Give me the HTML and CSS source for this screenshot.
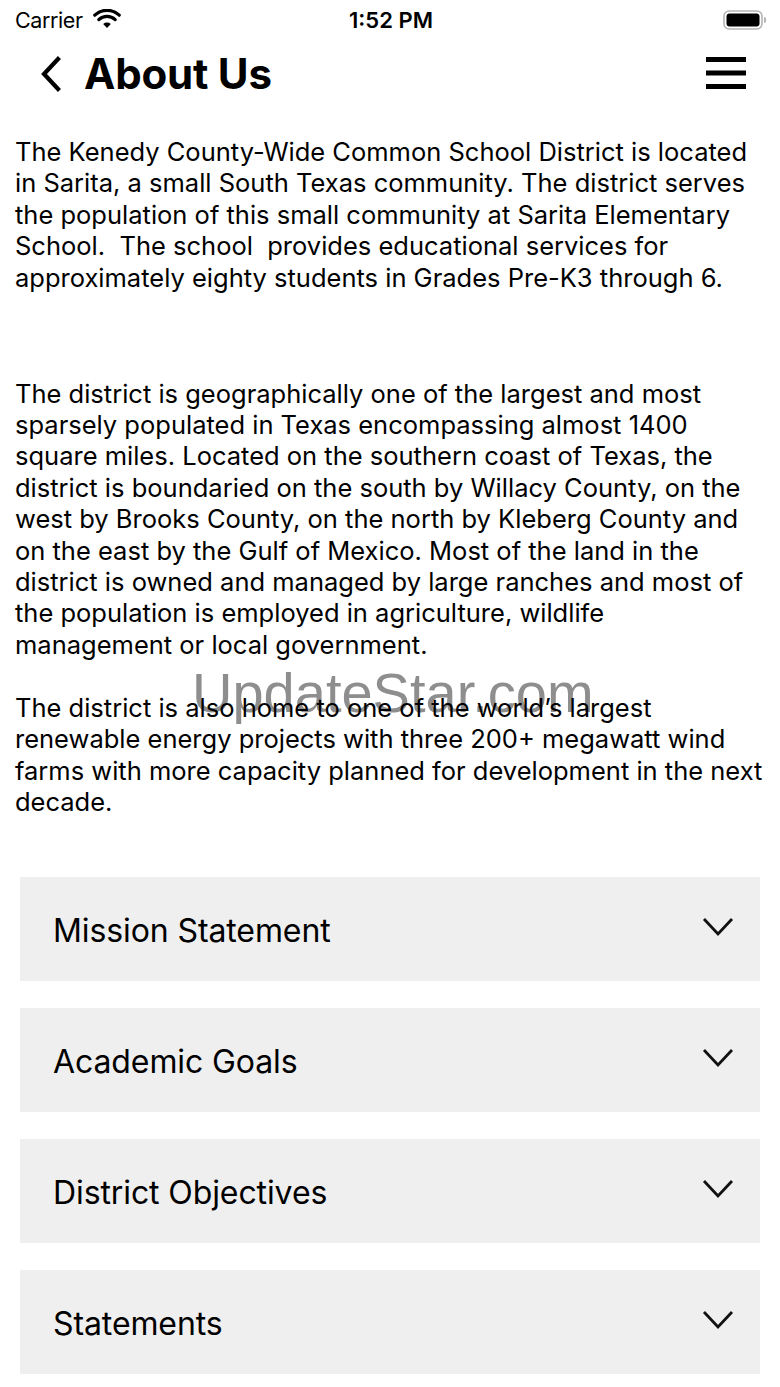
FILE: index.html
```html
<!DOCTYPE html>
<html lang="en">
<head>
<meta charset="utf-8">
<title>About Us</title>
<link rel="stylesheet" href="styles.css">
</head>
<body>
<div class="screen">
  <div class="status">
    <div class="status-left">
      <span class="carrier">Carrier</span>
      <svg class="wifi" width="28" height="20" viewBox="0 0 28 20">
        <path d="M14 19 L10.2 15 A5.6 5.6 0 0 1 17.8 15 Z" fill="#000"/>
        <path d="M5.8 10.6 A11.8 11.8 0 0 1 22.2 10.6" fill="none" stroke="#000" stroke-width="3.2" stroke-linecap="round"/>
        <path d="M1.8 6.2 A17.6 17.6 0 0 1 26.2 6.2" fill="none" stroke="#000" stroke-width="3.2" stroke-linecap="round"/>
      </svg>
    </div>
    <div class="time">1:52 PM</div>
    <div class="status-right">
      <svg class="battery" width="44" height="20" viewBox="0 0 44 20">
        <rect x="1" y="1" width="38" height="18" rx="5" fill="none" stroke="#b5b5b5" stroke-width="1.6"/>
        <rect x="3.5" y="3.5" width="33" height="13" rx="3" fill="#000"/>
        <path d="M41 7 a2.2 3 0 0 1 0 6 z" fill="#b5b5b5"/>
      </svg>
    </div>
  </div>

  <div class="nav">
    <div class="nav-left">
      <svg class="back" width="26" height="36" viewBox="0 0 26 36">
        <path d="M20 3 L6 18 L20 33" fill="none" stroke="#000" stroke-width="4.2" stroke-linecap="square" stroke-linejoin="miter"/>
      </svg>
      <h1 class="title">About Us</h1>
    </div>
    <svg class="menu" width="40" height="32" viewBox="0 0 40 32">
      <rect x="0" y="0" width="40" height="5" fill="#000"/>
      <rect x="0" y="13.5" width="40" height="5" fill="#000"/>
      <rect x="0" y="27" width="40" height="5" fill="#000"/>
    </svg>
  </div>

  <div class="watermark">UpdateStar.com</div>

  <div class="content">
    <p class="para p1">The Kenedy County-Wide Common School District is located in Sarita, a small South Texas community. The district serves the population of this small community at Sarita Elementary School.&nbsp; The school&nbsp; provides educational services for approximately eighty students in Grades Pre-K3 through 6.</p>
    <p class="para p2">The district is geographically one of the largest and most sparsely populated in Texas encompassing almost 1400 square miles. Located on the southern coast of Texas, the district is boundaried on the south by Willacy County, on the west by Brooks County, on the north by Kleberg County and on the east by the Gulf of Mexico. Most of the land in the district is owned and managed by large ranches and most of the population is employed in agriculture, wildlife management or local government.</p>
    <p class="para p3">The district is also home to one of the world’s largest renewable energy projects with three 200+ megawatt wind farms with more capacity planned for development in the next decade.</p>
  </div>

  <div class="accordion">
    <div class="acc-item"><span class="acc-label">Mission Statement</span><svg class="chev" width="32" height="20" viewBox="0 0 32 20"><path d="M2 2 L16 17 L30 2" fill="none" stroke="#111" stroke-width="2.8"/></svg></div>
    <div class="acc-item"><span class="acc-label">Academic Goals</span><svg class="chev" width="32" height="20" viewBox="0 0 32 20"><path d="M2 2 L16 17 L30 2" fill="none" stroke="#111" stroke-width="2.8"/></svg></div>
    <div class="acc-item"><span class="acc-label">District Objectives</span><svg class="chev" width="32" height="20" viewBox="0 0 32 20"><path d="M2 2 L16 17 L30 2" fill="none" stroke="#111" stroke-width="2.8"/></svg></div>
    <div class="acc-item"><span class="acc-label">Statements</span><svg class="chev" width="32" height="20" viewBox="0 0 32 20"><path d="M2 2 L16 17 L30 2" fill="none" stroke="#111" stroke-width="2.8"/></svg></div>
  </div>
</div>
</body>
</html>
```

FILE: styles.css
```css
html, body {
  margin: 0;
  padding: 0;
  background: #fff;
}
body {
  font-family: Inter, "Liberation Sans", sans-serif;
  color: #000;
}
.screen {
  position: relative;
  width: 780px;
  height: 1387px;
  overflow: hidden;
}
.status {
  height: 40px;
  display: flex;
  align-items: center;
  justify-content: space-between;
  padding: 0 13px 0 15px;
  box-sizing: border-box;
}
.status-left {
  display: flex;
  align-items: center;
  gap: 10px;
  width: 200px;
}
.carrier {
  font-size: 21.5px;
  letter-spacing: -0.4px;
}
.wifi { margin-top: -2px; }
.time {
  font-size: 22px;
  font-weight: 600;
}
.status-right {
  width: 200px;
  display: flex;
  justify-content: flex-end;
}
.nav {
  height: 66px;
  display: flex;
  align-items: center;
  justify-content: space-between;
  padding: 0 34px 0 38px;
}
.nav-left {
  display: flex;
  align-items: center;
  gap: 20px;
}
.back { margin-top: 2px; }
.title {
  margin: 0;
  font-size: 42px;
  font-weight: 700;
  letter-spacing: -0.2px;
}
.content {
  position: relative;
  padding: 30px 15px 0 15px;
}
.para {
  margin: 0;
  font-size: 25.5px;
  line-height: 31.4px;
  letter-spacing: 0;
}
.p2 { margin-top: 84.6px; }
.p3 { margin-top: 31.6px; }
.accordion {
  margin: 59px 20px 0 20px;
  display: flex;
  flex-direction: column;
  gap: 27px;
}
.acc-item {
  height: 104px;
  background: #efefef;
  display: flex;
  align-items: center;
  justify-content: space-between;
  padding: 3px 26px 0 33px;
  box-sizing: border-box;
}
.acc-label {
  font-size: 32px;
  letter-spacing: -0.1px;
}
.chev { margin-top: -6px; }
.watermark {
  position: absolute;
  left: 192px;
  top: 660px;
  font-family: "Liberation Sans", sans-serif;
  font-size: 56px;
  color: #8e8e8e;
}
```
